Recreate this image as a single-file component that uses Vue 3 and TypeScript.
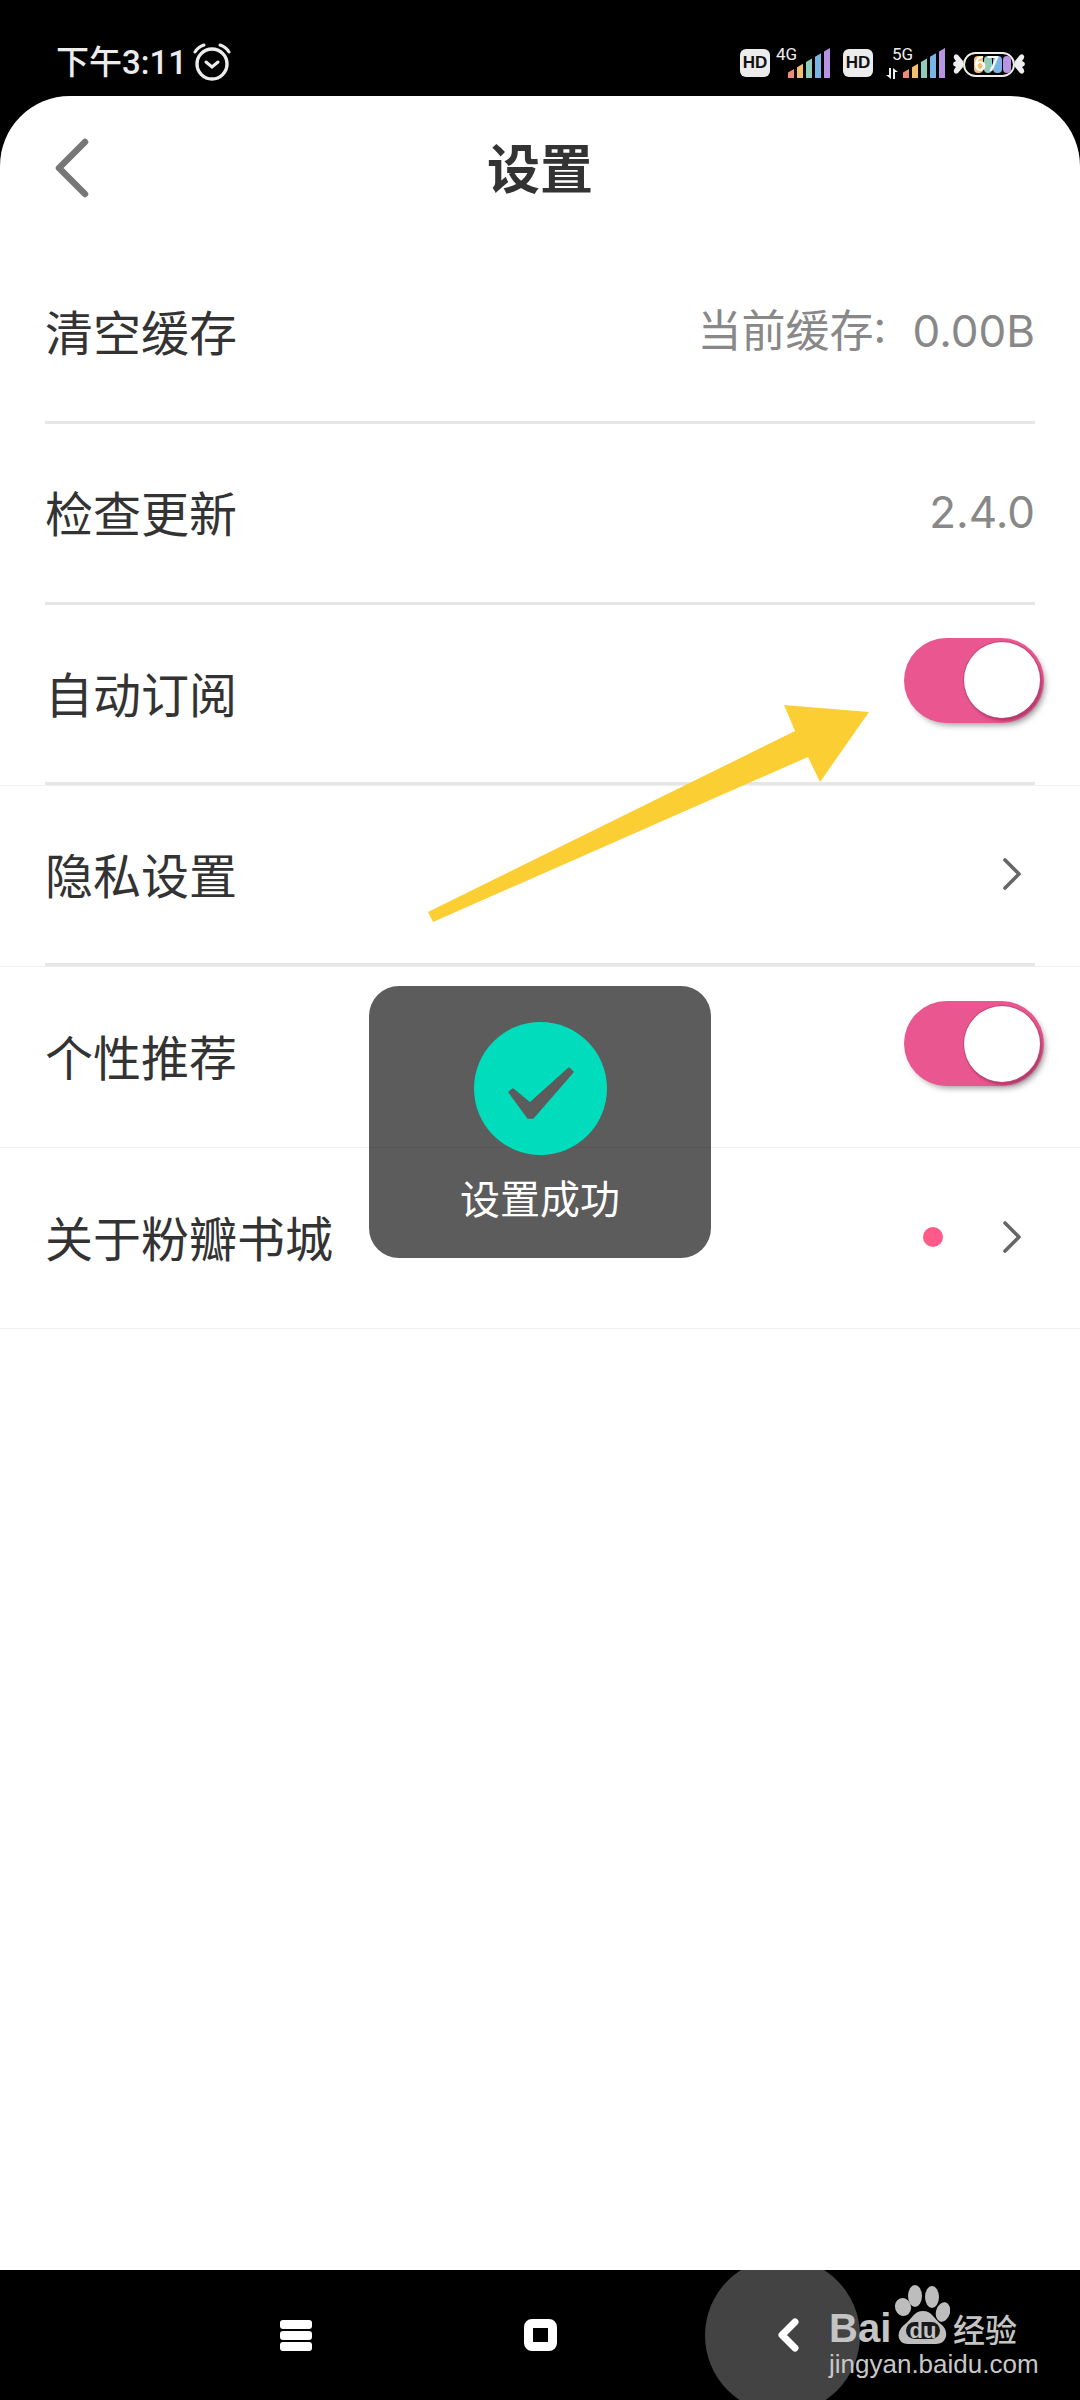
<script setup lang="ts">
interface Row {
  label: string
  value?: string
  toggle?: boolean
  chevron?: boolean
  dot?: boolean
  innerLine: boolean
  fullLine: boolean
}
const rows: Row[] = [
  { label: '清空缓存', value: '当前缓存: 0.00B', innerLine: true, fullLine: false },
  { label: '检查更新', value: '2.4.0', innerLine: true, fullLine: false },
  { label: '自动订阅', toggle: true, innerLine: true, fullLine: true },
  { label: '隐私设置', chevron: true, innerLine: true, fullLine: true },
  { label: '个性推荐', toggle: true, innerLine: false, fullLine: true },
  { label: '关于粉瓣书城', dot: true, chevron: true, innerLine: false, fullLine: true }
]
const barColors = ['#f08a78', '#f5bd6e', '#8fcdb8', '#78b4e6', '#b795e4']
</script>

<template>
  <div class="screen">
    <div class="status">
      <div class="status-left">
        <span class="time">下午3:11</span>
        <svg class="alarm" width="40" height="38" viewBox="0 0 40 38" fill="none" stroke="#ececec" stroke-linecap="round">
          <circle cx="20" cy="21" r="15" stroke-width="3.4" />
          <path d="M14 19l6 5 6-5" stroke-width="3" />
          <path d="M3 9 Q6 4 12 2" stroke-width="3" />
          <path d="M37 9 Q34 4 28 2" stroke-width="3" />
        </svg>
      </div>
      <div class="status-right">
        <span class="hd">HD</span>
        <div class="net net-4g">
          <span class="net-label">4G</span>
          <div class="bars">
            <i v-for="c in barColors" :key="c" :style="{ background: c }"></i>
          </div>
        </div>
        <span class="hd hd-two">HD</span>
        <div class="net net-5g">
          <span class="net-label">5G</span>
          <svg class="updown" width="14" height="11" viewBox="0 0 14 11" fill="#eee">
            <path d="M4 0h2v11L1 7h3zM8 0l5 4h-3v7H8z" />
          </svg>
          <div class="bars">
            <i v-for="c in barColors" :key="c" :style="{ background: c }"></i>
          </div>
        </div>
        <div class="battery">
          <svg width="10" height="22" viewBox="0 0 10 22" fill="#eee">
            <path d="M10 8 L5 2 Q2 0 1 3 Q0 5 3 8 Q0 9 0 11 Q0 13 3 14 Q0 17 1 19 Q2 22 5 20 L10 14Z" />
          </svg>
          <div class="battery-body">
            <i class="pill p1"></i><i class="pill p2"></i><i class="pill p3"></i><i class="pill p4"></i>
            <span class="battery-num">67</span>
          </div>
          <svg width="10" height="22" viewBox="0 0 10 22" fill="#eee">
            <path d="M0 8 L5 2 Q8 0 9 3 Q10 5 7 8 Q10 9 10 11 Q10 13 7 14 Q10 17 9 19 Q8 22 5 20 L0 14Z" />
          </svg>
        </div>
      </div>
    </div>

    <main class="card">
      <header class="head">
        <svg class="back" width="34" height="60" viewBox="0 0 34 60" fill="none" stroke="#777" stroke-width="6.5" stroke-linecap="round" stroke-linejoin="round">
          <path d="M30 4 L4 30 L30 56" />
        </svg>
        <h1 class="title">设置</h1>
      </header>

      <div v-for="row in rows" :key="row.label" class="row" :class="{ 'row-full': row.fullLine }">
        <div class="row-inner" :class="{ 'row-line': row.innerLine }">
          <span class="label">{{ row.label }}</span>
          <span v-if="row.value" class="value">{{ row.value }}</span>
          <div v-if="row.toggle" class="toggle"><span class="knob"></span></div>
          <div v-if="row.chevron || row.dot" class="tail">
            <span v-if="row.dot" class="dot"></span>
            <svg v-if="row.chevron" width="20" height="32" viewBox="0 0 20 32" fill="none" stroke="#666" stroke-width="3.6" stroke-linecap="round" stroke-linejoin="round">
              <path d="M3 2 L17 16 L3 30" />
            </svg>
          </div>
        </div>
      </div>

      <div class="toast">
        <div class="tick">
          <svg width="133" height="133" viewBox="0 0 133 133">
            <path d="M35 70 L39 67 L56 81 L95 46 L99 50 L59 96 L54 96 Z" fill="#5c5c5c" stroke="#5c5c5c" stroke-width="1.5" stroke-linejoin="round" />
          </svg>
        </div>
        <span class="toast-text">设置成功</span>
      </div>

      <svg class="arrow" width="460" height="230" viewBox="420 700 460 230">
        <polygon points="428,912 795,731 784,705 869,712 820,782 808,757 433,922" fill="#fbcf33" />
      </svg>
    </main>

    <footer class="nav">
      <span class="press"></span>
      <div class="menu"><i></i><i></i><i></i></div>
      <span class="home"></span>
      <svg class="nav-back" width="24" height="34" viewBox="0 0 24 34" fill="none" stroke="#fff" stroke-width="7" stroke-linecap="round" stroke-linejoin="round">
        <path d="M19 4 L6 17 L19 30" />
      </svg>
      <div class="mark">
        <div class="mark-top">
          <span class="mark-bai">Bai</span>
          <svg class="paw" width="58" height="62" viewBox="0 0 58 62">
            <g fill="#bdbdbd">
              <ellipse cx="23" cy="12" rx="7" ry="11" />
              <ellipse cx="40" cy="13" rx="7" ry="11" />
              <ellipse cx="11" cy="23" rx="8" ry="9" transform="rotate(-20 11 23)" />
              <ellipse cx="51" cy="28" rx="7" ry="10" transform="rotate(15 51 28)" />
              <path d="M31 27 C40 27 42 35 50 41 C58 49 54 60 44 60 L16 60 C6 60 3 49 12 41 C20 35 22 27 31 27Z" />
            </g>
            <rect x="14" y="38" width="34" height="17" rx="8.5" fill="#1a1a1a" />
            <text x="31" y="54" text-anchor="middle" fill="#c4c4c4" font-family="Liberation Sans, sans-serif" font-weight="700" font-size="22">du</text>
          </svg>
          <span class="mark-cn">经验</span>
        </div>
        <span class="mark-url">jingyan.baidu.com</span>
      </div>
    </footer>
  </div>
</template>

<style>
html, body { margin: 0; background: #000; }
</style>

<style scoped>
.screen {
  width: 1080px;
  height: 2400px;
  background: #000;
  display: flex;
  flex-direction: column;
  position: relative;
  overflow: hidden;
  font-family: Roboto, "Noto Sans CJK SC", sans-serif;
}
.status {
  height: 96px;
  flex: none;
  display: flex;
  justify-content: space-between;
  padding: 0 55px 0 56px;
  box-sizing: border-box;
  color: #ececec;
}
.status-left {
  display: flex;
  align-items: flex-start;
  padding-top: 43px;
}
.time { font-size: 33px; line-height: 40px; margin-right: 5px; font-weight: 500; }
.alarm { display: block; }
.status-right {
  display: flex;
  align-items: flex-start;
  padding-top: 47px;
  box-sizing: border-box;
}
.hd {
  width: 30px;
  height: 28px;
  margin-top: 2px;
  background: #ececec;
  border-radius: 6px;
  color: #111;
  font: 700 17px/28px "Liberation Sans", sans-serif;
  text-align: center;
}
.net { position: relative; height: 32px; }
.net-4g { width: 60px; }
.hd-two { margin-left: 13px; }
.net-5g { width: 72px; margin-left: 8px; }
.net-label {
  position: absolute;
  top: -2px;
  left: 6px;
  color: #eee;
  font: 400 17px/18px Roboto, sans-serif;
}
.net-5g .net-label { left: 11px; }
.updown { position: absolute; left: 4px; top: 21px; }
.bars {
  position: absolute;
  bottom: 1px;
  display: flex;
  gap: 3px;
  height: 30px;
  clip-path: polygon(0 100%, 0 82%, 100% 0, 100% 100%);
}
.net-4g .bars { right: 0; }
.net-5g .bars { right: 8px; }
.bars i { display: block; width: 6px; }
.battery {
  display: flex;
  align-items: center;
  height: 28px;
  margin-top: 3px;
}
.battery svg { display: block; flex: none; }
.battery-body {
  width: 52px;
  height: 25px;
  box-sizing: border-box;
  border: 2px solid #eee;
  border-radius: 13px;
  position: relative;
  display: flex;
  align-items: center;
  gap: 1px;
  padding-left: 9px;
}
.pill { width: 8.5px; height: 17px; border-radius: 4px; display: block; }
.p1 { background: #f5bd6e; }
.p2 { background: #8fcdb8; }
.p3 { background: #78b4e6; }
.p4 { background: #b795e4; }
.battery-num {
  position: absolute;
  left: 9px;
  top: -2px;
  color: #fff;
  font: 500 21px/25px Roboto, sans-serif;
  letter-spacing: 1px;
}
.card {
  flex: 1;
  background: #fff;
  border-radius: 70px 70px 0 0;
  position: relative;
}
.head {
  height: 147px;
  display: flex;
  align-items: center;
  justify-content: center;
  position: relative;
  padding-bottom: 5px;
  box-sizing: border-box;
}
.back { position: absolute; left: 55px; top: 42px; }
.title {
  margin: 0;
  font: 700 53px/1.2 "Noto Sans CJK SC", sans-serif;
  color: #333;
}
.row { height: 181px; box-sizing: border-box; }
.row-full { border-bottom: 1px solid #efefef; }
.row-inner {
  height: 100%;
  margin: 0 45px;
  padding-bottom: 2px;
  box-sizing: border-box;
  display: flex;
  align-items: center;
  justify-content: space-between;
}
.row-line { border-bottom: 3px solid #e6e6e6; }
.label {
  font: 400 48px/1.2 "Noto Sans CJK SC", sans-serif;
  color: #333;
}
.value {
  font: 400 44px/1.2 Inter, "Noto Sans CJK SC", sans-serif;
  word-spacing: 14px;
  color: #888;
}
.toggle {
  width: 140px;
  height: 85px;
  border-radius: 43px;
  background: #ea5790;
  margin-right: -9px;
  margin-bottom: 25px;
  display: flex;
  align-items: center;
  justify-content: flex-end;
  padding-right: 4px;
  box-sizing: border-box;
  box-shadow: 3px 4px 6px -2px rgba(0, 0, 0, 0.4);
}
.knob {
  width: 76px;
  height: 76px;
  border-radius: 50%;
  background: #fff;
  box-shadow: 0 0 0 1px #c04878, 2px 3px 3px rgba(120, 30, 70, 0.55);
}
.tail {
  display: flex;
  align-items: center;
  gap: 59px;
  margin-right: 13px;
}
.tail svg { display: block; }
.dot {
  width: 20px;
  height: 20px;
  border-radius: 50%;
  background: #ff5a8a;
}
.toast {
  position: absolute;
  left: 369px;
  top: 890px;
  width: 342px;
  height: 272px;
  border-radius: 30px;
  background: rgba(0, 0, 0, 0.64);
  display: flex;
  flex-direction: column;
  align-items: center;
  padding-top: 36px;
  box-sizing: border-box;
}
.tick {
  width: 133px;
  height: 133px;
  border-radius: 50%;
  background: #00dcbc;
}
.tick svg { display: block; }
.toast-text {
  margin-top: 18px;
  font: 400 40px/48px "Noto Sans CJK SC", sans-serif;
  color: #fff;
}
.arrow {
  position: absolute;
  left: 420px;
  top: 604px;
}
.nav {
  height: 130px;
  flex: none;
  position: relative;
  overflow: hidden;
  display: flex;
  align-items: center;
  padding-left: 280px;
  box-sizing: border-box;
}
.press {
  position: absolute;
  left: 705px;
  top: -12px;
  width: 155px;
  height: 155px;
  border-radius: 50%;
  background: #434343;
}
.menu {
  width: 32px;
  display: flex;
  flex-direction: column;
  gap: 2px;
  margin-right: 212px;
}
.menu i { display: block; height: 9px; background: #fff; border-radius: 3px; }
.home {
  width: 33px;
  height: 32px;
  box-sizing: border-box;
  border: 9px solid #fff;
  border-radius: 8px;
  margin-right: 219px;
}
.nav-back { position: relative; display: block; }
.mark {
  position: absolute;
  left: 829px;
  top: 14px;
  width: 195px;
  display: flex;
  flex-direction: column;
}
.mark-top {
  height: 62px;
  display: flex;
  align-items: flex-end;
  color: #c4c4c4;
}
.mark-bai { font: 700 40px/30px "Liberation Sans", sans-serif; width: 63px; flex: none; margin-bottom: 3px; }
.paw { display: block; flex: none; }
.mark-cn { font: 500 32px/32px "Noto Sans CJK SC", sans-serif; margin-left: 3px; margin-bottom: 2px; white-space: nowrap; }
.mark-url {
  color: #c8c8c8;
  font: 400 26px/30px "Liberation Sans", sans-serif;
  margin-top: 3px;
  white-space: nowrap;
}
</style>
